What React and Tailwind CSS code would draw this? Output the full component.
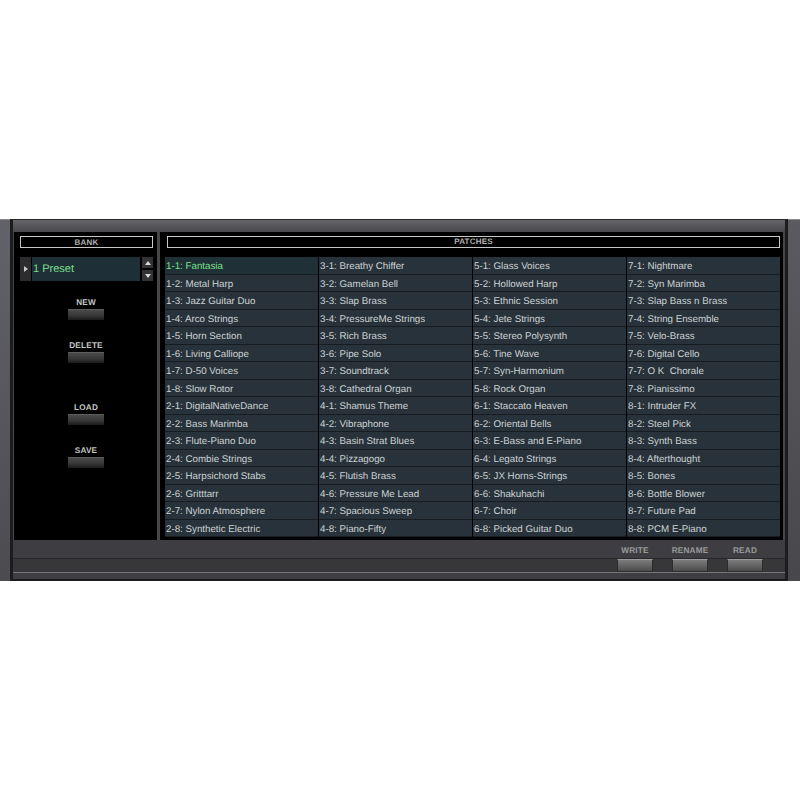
const patches = [
  ["1-1: Fantasia","1-2: Metal Harp","1-3: Jazz Guitar Duo","1-4: Arco Strings","1-5: Horn Section","1-6: Living Calliope","1-7: D-50 Voices","1-8: Slow Rotor","2-1: DigitalNativeDance","2-2: Bass Marimba","2-3: Flute-Piano Duo","2-4: Combie Strings","2-5: Harpsichord Stabs","2-6: Gritttarr","2-7: Nylon Atmosphere","2-8: Synthetic Electric"],
  ["3-1: Breathy Chiffer","3-2: Gamelan Bell","3-3: Slap Brass","3-4: PressureMe Strings","3-5: Rich Brass","3-6: Pipe Solo","3-7: Soundtrack","3-8: Cathedral Organ","4-1: Shamus Theme","4-2: Vibraphone","4-3: Basin Strat Blues","4-4: Pizzagogo","4-5: Flutish Brass","4-6: Pressure Me Lead","4-7: Spacious Sweep","4-8: Piano-Fifty"],
  ["5-1: Glass Voices","5-2: Hollowed Harp","5-3: Ethnic Session","5-4: Jete Strings","5-5: Stereo Polysynth","5-6: Tine Wave","5-7: Syn-Harmonium","5-8: Rock Organ","6-1: Staccato Heaven","6-2: Oriental Bells","6-3: E-Bass and E-Piano","6-4: Legato Strings","6-5: JX Horns-Strings","6-6: Shakuhachi","6-7: Choir","6-8: Picked Guitar Duo"],
  ["7-1: Nightmare","7-2: Syn Marimba","7-3: Slap Bass n Brass","7-4: String Ensemble","7-5: Velo-Brass","7-6: Digital Cello","7-7: O K  Chorale","7-8: Pianissimo","8-1: Intruder FX","8-2: Steel Pick","8-3: Synth Bass","8-4: Afterthought","8-5: Bones","8-6: Bottle Blower","8-7: Future Pad","8-8: PCM E-Piano"],
];

function SideButton({ label, className }) {
  return (
    <div className={`flex flex-col items-center pr-[1px] ${className}`}>
      <div className="h-[10px] text-[8.2px] leading-[12px] font-bold text-[#c4c4c4] tracking-[0.2px]">{label}</div>
      <div className="mt-[2px] w-[36px] h-[11px] bg-gradient-to-b from-[#4a4a4a] via-[#3a3a3a] to-[#1c1c1c] border-t border-[#5c5c5c]" />
    </div>
  );
}

function FootButton({ label }) {
  return (
    <div className="relative w-[36px] flex flex-col items-center">
      <div className="h-[10px] text-[8.2px] leading-[12px] font-bold text-[#9a9a9a] tracking-[0.2px] whitespace-nowrap">{label}</div>
      <div className="mt-[4px] w-[36px] h-[13px] bg-gradient-to-b from-[#7c7c7c] to-[#4c4c4c] border border-[#2c2c2c] border-t-[#9a9a9a]" />
    </div>
  );
}

export default function App() {
  return (
    <div className="w-[800px] h-[800px] bg-white pt-[219px] font-['Liberation_Sans',Arial,sans-serif] [text-rendering:geometricPrecision]">
      <div className="h-[362px] flex bg-[#3d3d42]">
        <div className="w-[10px] shrink-0 bg-gradient-to-b from-[#62626a] to-[#4c4c50] border-t border-[#8a8a8e]" />
        <div className="w-[778px] shrink-0 flex flex-col border-t border-b-2 border-t-[#2a2a2a] border-b-[#1c1c1e] border-l-[3px] border-l-[#1c1c1e] border-r-[3px] border-r-[#1c1c1e]">
          <div className="h-[12px] bg-gradient-to-b from-[#66666a] to-[#48484c] shrink-0" />
          <div className="h-[308px] flex shrink-0 bg-[#47474a]">
            <div className="w-[143px] shrink-0 ml-[1px] bg-black flex flex-col pt-[4px] pl-[6px] pr-[4px]">
              <div className="h-[12px] border border-[#c8c8c8] text-[8px] leading-[12px] font-bold text-[#b0b0b0] text-center tracking-[0.2px]">BANK</div>
              <div className="mt-[9px] h-[24px] flex items-stretch">
                <div className="w-[11px] bg-[#2c2c2e] flex items-center justify-center">
                  <svg width="4" height="6" viewBox="0 0 4 6"><path d="M0 0L4 3L0 6Z" fill="#c8c8c8" /></svg>
                </div>
                <div className="flex-1 ml-[1px] bg-[#1f2f38] flex items-center pl-[1px] pt-[1px] text-[11px] text-[#7be08c]">1 Preset</div>
                <div className="w-[11px] ml-[2px] flex flex-col justify-between">
                  <div className="h-[11px] bg-[#333336] flex items-center justify-center">
                    <svg width="6" height="4" viewBox="0 0 6 4"><path d="M0 4L3 0L6 4Z" fill="#d8d8d8" /></svg>
                  </div>
                  <div className="h-[11px] bg-[#333336] flex items-center justify-center">
                    <svg width="6" height="4" viewBox="0 0 6 4"><path d="M0 0L3 4L6 0Z" fill="#d8d8d8" /></svg>
                  </div>
                </div>
              </div>
              <SideButton label="NEW" className="mt-[16px]" />
              <SideButton label="DELETE" className="mt-[20px]" />
              <SideButton label="LOAD" className="mt-[39px]" />
              <SideButton label="SAVE" className="mt-[20px]" />
            </div>
            <div className="w-[3px] shrink-0" />
            <div className="flex-1 min-w-0 bg-black pt-[4px] pl-[5px] pr-[3px] mr-[2px]">
              <div className="ml-[2px] h-[12px] border border-[#c8c8c8] text-[8px] leading-[10px] font-bold text-[#b0b0b0] text-center tracking-[0.2px]">PATCHES</div>
              <div className="mt-[9px] grid grid-cols-4 gap-x-[1px]">
                {patches.map((col, c) => (
                  <div key={c} className="flex flex-col">
                    {col.map((name, r) => (
                      <div key={name} className={`h-[17.5px] pl-[1px] pt-[2px] text-[9.75px] leading-[16px] whitespace-pre border-b border-[#161c20] ${c === 0 && r === 0 ? "bg-[#1f3036] text-[#7be08c]" : "bg-[#28323a] text-[#cdd2d4]"}`}>{name}</div>
                    ))}
                  </div>
                ))}
              </div>
            </div>
          </div>
          <div className="flex-1 relative bg-[#3e3e42] flex justify-end gap-[19px] pr-[22px] pt-[5px]">
            <div className="absolute left-0 right-0 top-[18px] h-[14px] bg-[#37373a] border-t border-[#28282a]" />
            <div className="absolute left-0 right-0 top-[32px] h-[1px] bg-[#77777a]" />
            <FootButton label="WRITE" />
            <FootButton label="RENAME" />
            <FootButton label="READ" />
          </div>
        </div>
        <div className="flex-1 bg-gradient-to-b from-[#5a5a60] to-[#48484c] border-t border-[#8a8a8e]" />
      </div>
    </div>
  );
}
